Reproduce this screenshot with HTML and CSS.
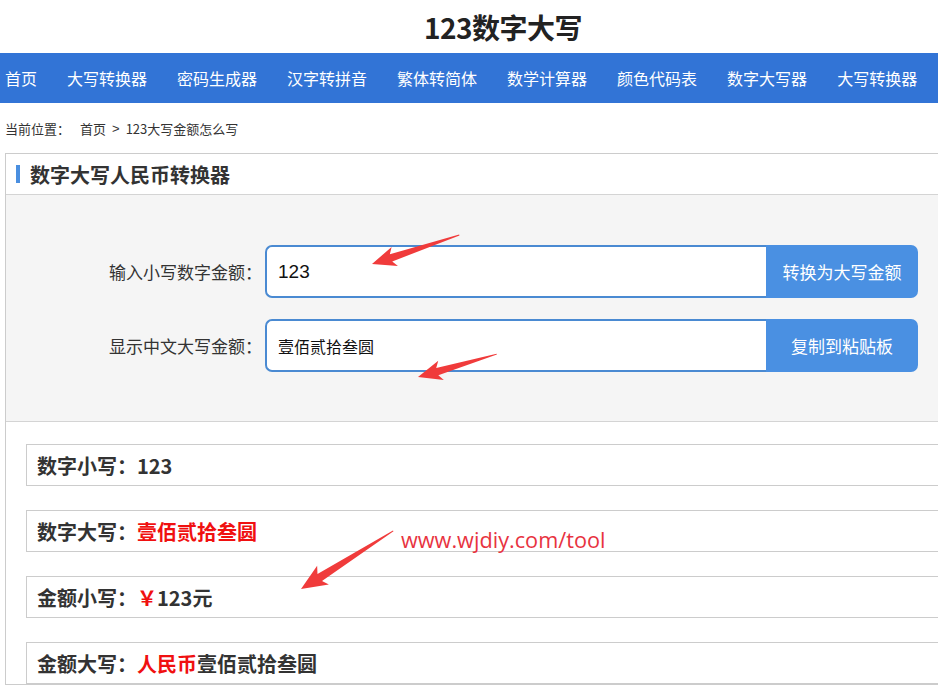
FILE: index.html
```html
<!DOCTYPE html>
<html lang="zh-CN">
<head>
<meta charset="utf-8">
<title>123数字大写</title>
<link rel="stylesheet" href="styles.css">
</head>
<body>
<div class="page">
  <header class="site-head">
    <h1 class="site-title">123数字大写</h1>
  </header>
  <nav class="nav">
    <a class="nav-item">首页</a>
    <a class="nav-item">大写转换器</a>
    <a class="nav-item">密码生成器</a>
    <a class="nav-item">汉字转拼音</a>
    <a class="nav-item">繁体转简体</a>
    <a class="nav-item">数学计算器</a>
    <a class="nav-item">颜色代码表</a>
    <a class="nav-item">数字大写器</a>
    <a class="nav-item">大写转换器</a>
  </nav>
  <div class="crumb">
    <span class="crumb-label">当前位置：</span>
    <span>首页</span>
    <span class="crumb-sep">&gt;</span>
    <span>123大写金额怎么写</span>
  </div>
  <section class="box">
    <div class="box-head"><span class="bar"></span><h2 class="box-title">数字大写人民币转换器</h2></div>
    <div class="form">
      <div class="form-row">
        <label class="form-label">输入小写数字金额：</label>
        <div class="field"><span class="field-value num">123</span></div>
        <button class="btn">转换为大写金额</button>
      </div>
      <div class="form-row">
        <label class="form-label">显示中文大写金额：</label>
        <div class="field"><span class="field-value">壹佰贰拾叁圆</span></div>
        <button class="btn">复制到粘贴板</button>
      </div>
    </div>
    <div class="results">
      <div class="res-row">数字小写：123</div>
      <div class="res-row">数字大写：<span class="red">壹佰贰拾叁圆</span></div>
      <div class="res-row">金额小写：<span class="red">￥</span>123元</div>
      <div class="res-row">金额大写：<span class="red">人民币</span>壹佰贰拾叁圆</div>
    </div>
  </section>

  <div class="watermark">www.wjdiy.com/tool</div>
  <svg class="arrows" width="938" height="685" viewBox="0 0 938 685">
    <g fill="#f03b3b">
      <g transform="translate(372,264) rotate(-18.4)">
        <polygon points="0,0 24,-10 20,-3.6 92,-0.5 92,0.5 20,4 24,10"/>
      </g>
      <g transform="translate(418,377) rotate(-16.2)">
        <polygon points="0,0 24,-10 20,-3.6 82,-0.5 82,0.5 20,4 24,10"/>
      </g>
      <g transform="translate(301,589) rotate(-32.2)">
        <polygon points="0,0 26,-11 22,-4 109,-0.5 109,0.5 22,4.5 26,11"/>
      </g>
    </g>
  </svg>
</div>
</body>
</html>
```

FILE: styles.css
```css
html, body {
  margin: 0;
  padding: 0;
  background: #fff;
  overflow: hidden;
}
body {
  font-family: "Noto Sans CJK SC", "Noto Sans", sans-serif;
  color: #333;
}
.page {
  position: relative;
  width: 938px;
  height: 685px;
  overflow: hidden;
}
.site-head {
  height: 53px;
  display: flex;
  align-items: center;
  justify-content: center;
  padding-left: 68px;
}
.site-title {
  margin: 0;
  font-size: 28px;
  font-weight: 700;
  color: #222;
  line-height: 1;
  letter-spacing: -0.5px;
}
.nav {
  height: 50px;
  background: #3274d6;
  display: flex;
  align-items: center;
  gap: 30px;
  padding-left: 5px;
}
.nav-item {
  color: #fff;
  font-size: 16px;
  line-height: 50px;
  text-decoration: none;
  white-space: nowrap;
}
.crumb {
  height: 50px;
  display: flex;
  align-items: center;
  padding-left: 5px;
  font-size: 13px;
  color: #333;
}
.crumb-label { margin-right: 10px; }
.crumb-sep { margin: 0 6px; font-family: "Liberation Sans", sans-serif; }
.box {
  margin-left: 5px;
  width: 1000px;
  border: 1px solid #ccc;
}
.box-head {
  height: 40px;
  display: flex;
  align-items: center;
  border-bottom: 1px solid #d4d4d4;
}
.bar {
  width: 4px;
  height: 18px;
  background: #4a8fe0;
  margin-left: 10px;
  margin-right: 10px;
}
.box-title {
  margin: 0;
  font-size: 20px;
  font-weight: 700;
  color: #333;
}
.form {
  background: #f5f5f5;
  padding: 50px 0 49px;
  border-bottom: 1px solid #d4d4d4;
  display: flex;
  flex-direction: column;
  gap: 21px;
}
.form-row {
  display: flex;
  align-items: center;
  height: 53px;
}
.form-label {
  width: 256px;
  text-align: right;
  font-size: 17px;
  color: #333;
  margin-right: 3px;
  white-space: nowrap;
}
.field {
  width: 488px;
  height: 49px;
  border: 2px solid #4a8ad2;
  border-right: none;
  border-radius: 7px 0 0 7px;
  background: #fff;
  display: flex;
  align-items: center;
  padding-left: 11px;
  box-sizing: content-box;
}
.field-value {
  font-size: 16px;
  color: #111;
}
.field-value.num {
  font-family: "Liberation Sans", Arial, sans-serif;
  font-size: 19px;
}
.btn {
  width: 152px;
  height: 53px;
  border: none;
  background: #4a90e2;
  color: #fff;
  font-family: inherit;
  font-size: 17px;
  border-radius: 0 7px 7px 0;
  padding: 0;
}
.results {
  padding: 22px 0 0 20px;
  display: flex;
  flex-direction: column;
  gap: 24px;
}
.res-row {
  height: 40px;
  border: 1px solid #ccc;
  border-right: none;
  display: flex;
  align-items: center;
  padding-left: 10px;
  font-size: 20px;
  font-weight: 700;
  color: #333;
}
.red { color: #f01010; }
.watermark {
  position: absolute;
  left: 401px;
  top: 525px;
  font-family: "Open Sans", "Noto Sans", sans-serif;
  font-size: 21.7px;
  color: #e8333f;
  line-height: 30px;
}
.arrows {
  position: absolute;
  left: 0;
  top: 0;
  pointer-events: none;
}
```
